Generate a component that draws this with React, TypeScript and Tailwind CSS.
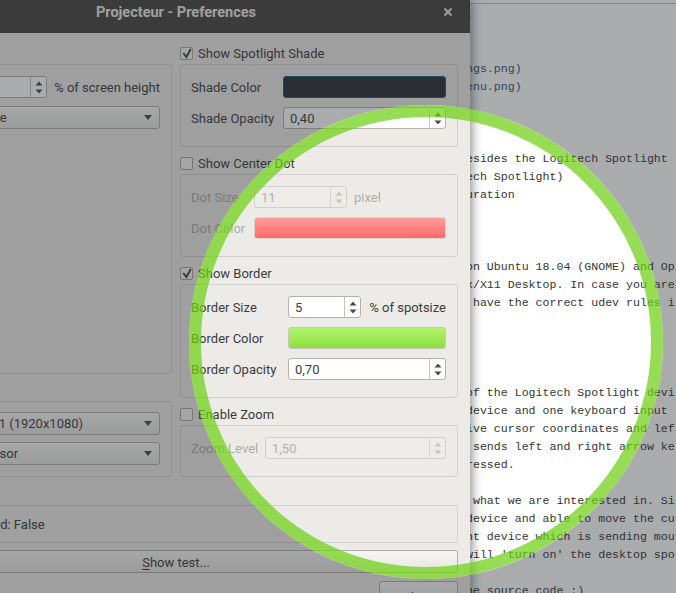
import { ReactNode } from "react";
import clsx from "clsx";

const editorLines = [
  ".",
  "",
  "",
  "ngs.png)",
  "enu.png)",
  "",
  "",
  "",
  "esides the Logitech Spotlight ",
  "ech Spotlight)",
  "uration",
  "",
  "",
  "",
  "on Ubuntu 18.04 (GNOME) and Op",
  "x/X11 Desktop. In case you are",
  " have the correct udev rules i",
  "",
  "",
  "",
  "",
  "of the Logitech Spotlight devi",
  "device and one keyboard input ",
  "ive cursor coordinates and lef",
  " sends left and right arrow ke",
  "ressed.",
  "",
  " what we are interested in. Si",
  "device and able to move the cu",
  "nt device which is sending mou",
  "will 'turn on' the desktop spo",
  "",
  "he source code :)",
];

function Arrows({ disabled }: { disabled?: boolean }) {
  const fill = disabled ? "#c9c6c1" : "#4a4a4a";
  return (
    <svg width="8" height="13" viewBox="0 0 8 13">
      <path d="M0.5 4.5 L4 0.5 L7.5 4.5 Z" fill={fill} />
      <path d="M0.5 8.5 L4 12.5 L7.5 8.5 Z" fill={fill} />
    </svg>
  );
}

function SpinBox({
  value,
  disabled,
  className,
}: {
  value: string;
  disabled?: boolean;
  className?: string;
}) {
  return (
    <div
      className={clsx(
        "flex h-[22px] rounded-[3px] border",
        disabled
          ? "border-[#d2cfca] bg-[#eeece9] text-[#b3b0ab]"
          : "border-[#b4b0aa] bg-white text-[#3c3c3c]",
        className
      )}
    >
      <span className="flex-1 pl-[6px] leading-[21px]">{value}</span>
      <div
        className={clsx(
          "flex w-[16px] items-center justify-center border-l",
          disabled ? "border-[#d8d5d0]" : "border-[#c6c2bc]"
        )}
      >
        <Arrows disabled={disabled} />
      </div>
    </div>
  );
}

function Combo({ text }: { text: string }) {
  return (
    <div className="flex h-[23px] flex-1 items-center overflow-hidden rounded-[3px] border border-[#b1ada7] bg-gradient-to-b from-[#f8f7f5] to-[#e7e5e1] pl-[8px] pr-[7px] text-[#3c3c3c]">
      <span className="flex-1 whitespace-nowrap">{text}</span>
      <svg width="8" height="5" viewBox="0 0 8 5">
        <path d="M0 0 L8 0 L4 5 Z" fill="#4a4a4a" />
      </svg>
    </div>
  );
}

function Swatch({ className }: { className: string }) {
  return <div className={clsx("h-[22px] flex-1 rounded-[3px] border", className)} />;
}

function CheckRow({ checked, label }: { checked?: boolean; label: string }) {
  return (
    <div className="flex h-[18px] items-center gap-[5px] pt-[1px] text-[#3c3c3c]">
      <span className="flex h-[13px] w-[13px] items-center justify-center rounded-[2px] border border-[#aaa6a0] bg-[#f6f5f3]">
        {checked && (
          <svg width="11" height="11" viewBox="0 0 11 11">
            <path
              d="M2.3 5 L5.4 9 L9.8 1"
              fill="none"
              stroke="#3a3a3a"
              strokeWidth="1.8"
            />
          </svg>
        )}
      </span>
      <span>{label}</span>
    </div>
  );
}

function Group({ children, className }: { children: ReactNode; className?: string }) {
  return (
    <div
      className={clsx(
        "mt-[2px] flex flex-col rounded-[3px] border border-[#d3d0cb] pl-[10px] pr-[11px]",
        className
      )}
    >
      {children}
    </div>
  );
}

function Row({
  label,
  labelWidth,
  disabled,
  children,
}: {
  label: string;
  labelWidth: string;
  disabled?: boolean;
  children: ReactNode;
}) {
  return (
    <div className="flex items-center gap-[6px]">
      <span
        className={clsx(
          "shrink-0 whitespace-nowrap pt-[2px]",
          labelWidth,
          disabled ? "text-[#b0ada8]" : "text-[#3c3c3c]"
        )}
      >
        {label}
      </span>
      {children}
    </div>
  );
}

function LeftColumn() {
  return (
    <div className="flex flex-col gap-[7px]">
      <div className="flex flex-1 flex-col">
        <div className="flex h-[18px] items-center text-[#3c3c3c]">Spot Size</div>
        <Group className="flex-1 gap-[8px] pt-[11px]">
          <Row label="Size" labelWidth="w-[54px]">
            <SpinBox value="35" className="flex-1" />
            <span className="ml-[1px] whitespace-nowrap pt-[2px] text-[#3c3c3c]">% of screen height</span>
          </Row>
          <Row label="Shape" labelWidth="w-[54px]">
            <Combo text="Circle" />
          </Row>
        </Group>
      </div>
      <div className="flex flex-col">
        <div className="flex h-[18px] items-center text-[#3c3c3c]">Screen</div>
        <Group className="gap-[7px] pb-[11px] pt-[10px]">
          <Row label="" labelWidth="w-[22px]">
            <Combo text="Screen 0: 1 (1920x1080)" />
          </Row>
          <Row label="" labelWidth="w-[22px]">
            <Combo text="Arrow Cursor" />
          </Row>
        </Group>
      </div>
    </div>
  );
}

function RightColumn() {
  return (
    <div className="flex flex-col gap-[7px]">
      <div className="flex flex-col">
        <CheckRow checked label="Show Spotlight Shade" />
        <Group className="gap-[9px] pb-[17px] pt-[11px]">
          <Row label="Shade Color" labelWidth="w-[86px]">
            <Swatch className="border-[#1a5a8a] bg-[#2a2e33]" />
          </Row>
          <Row label="Shade Opacity" labelWidth="w-[86px]">
            <SpinBox value="0,40" className="flex-1" />
          </Row>
        </Group>
      </div>
      <div className="flex flex-col">
        <CheckRow label="Show Center Dot" />
        <Group className="gap-[9px] pb-[17px] pt-[11px]">
          <Row label="Dot Size" labelWidth="w-[57px]" disabled>
            <SpinBox value="11" disabled className="w-[93px]" />
            <span className="ml-[1px] pt-[2px] text-[#b0ada8]">pixel</span>
          </Row>
          <Row label="Dot Color" labelWidth="w-[57px]" disabled>
            <Swatch className="border-[#d8d5d0] bg-gradient-to-b from-[#ff9c9c] to-[#fb6868]" />
          </Row>
        </Group>
      </div>
      <div className="flex flex-col">
        <CheckRow checked label="Show Border" />
        <Group className="gap-[9px] pb-[17px] pt-[11px]">
          <Row label="Border Size" labelWidth="w-[91px]">
            <SpinBox value="5" className="flex-1" />
            <span className="ml-[2px] whitespace-nowrap pt-[2px] text-[#3c3c3c]">% of spotsize</span>
          </Row>
          <Row label="Border Color" labelWidth="w-[91px]">
            <Swatch className="border-[#c9c6c0] bg-gradient-to-b from-[#b2f46c] to-[#8cdf3c]" />
          </Row>
          <Row label="Border Opacity" labelWidth="w-[91px]">
            <SpinBox value="0,70" className="flex-1" />
          </Row>
        </Group>
      </div>
      <div className="flex flex-col">
        <CheckRow label="Enable Zoom" />
        <Group className="pb-[17px] pt-[11px]">
          <Row label="Zoom Level" labelWidth="w-[68px]" disabled>
            <SpinBox value="1,50" disabled className="flex-1" />
          </Row>
        </Group>
      </div>
    </div>
  );
}

function Dialog() {
  return (
    <div className="absolute left-[-118px] top-0 w-[588px] bg-[#edebe8] text-[13px] shadow-[2px_0_10px_rgba(0,0,0,0.45)]">
      <div className="grid h-[33px] grid-cols-[1fr_auto_1fr] items-start bg-[#46443f] pt-[4px]">
        <span />
        <span className="text-[14.5px] font-bold leading-[17px] text-[#ecebe7]">
          Projecteur - Preferences
        </span>
        <div className="flex justify-end pr-[18px] pt-[4px]">
          <svg width="8" height="8" viewBox="0 0 8 8">
            <path d="M0.5 0.5 L7.5 7.5 M7.5 0.5 L0.5 7.5" stroke="#e8e8e8" strokeWidth="2" />
          </svg>
        </div>
      </div>
      <div className="flex flex-col gap-[7px] px-[12px] pt-[11px]">
        <div className="grid grid-cols-2 gap-x-[8px]">
          <LeftColumn />
          <RightColumn />
        </div>
        <div className="mt-[1px] flex flex-col">
          <div className="flex h-[18px] items-center text-[#3c3c3c]">Status</div>
          <div className="mt-[2px] flex h-[38px] items-center rounded-[3px] border border-[#d3d0cb] pl-[10px] pt-[2px] text-[#3c3c3c]">
            Device connected: False
          </div>
        </div>
        <button className="h-[23px] rounded-[3px] border border-[#b1ada7] bg-gradient-to-b from-[#f8f7f5] to-[#e6e4e0] pt-[2px] text-[#3c3c3c]">
          <span className="underline underline-offset-2">S</span>how test...
        </button>
        <div className="mt-[1px] flex justify-end pb-[10px]">
          <button className="h-[34px] w-[79px] rounded-[3px] border border-[#b1ada7] bg-gradient-to-b from-[#f8f7f5] to-[#e6e4e0] text-[#3c3c3c]">
            Close
          </button>
        </div>
      </div>
    </div>
  );
}

function Editor() {
  return (
    <div className="h-full w-full bg-white">
      <div className="h-[4px] border-b border-[#c4c4c4] bg-white" />
      <div className="pl-[466px] pt-[2px] font-['Liberation_Mono',monospace] text-[11.6px] leading-[18px] text-[#353535]">
        {editorLines.map((line, i) => (
          <div
            key={i}
            className={clsx(
              "h-[18px] whitespace-pre",
              (i === 3 || i === 4) && "text-[#3a547e]"
            )}
          >
            {line}
          </div>
        ))}
      </div>
    </div>
  );
}

export default function App() {
  return (
    <div className="relative h-[593px] w-[676px] overflow-hidden font-[Roboto,sans-serif]">
      <Editor />
      <Dialog />
      <div className="pointer-events-none absolute inset-0 bg-[radial-gradient(circle_at_426px_342px,transparent_236.5px,rgba(42,46,51,0.4)_237.5px)]" />
      <div className="pointer-events-none absolute left-[189px] top-[105px] h-[474px] w-[474px] rounded-full border-[12px] border-[rgba(110,208,20,0.72)]" />
    </div>
  );
}
